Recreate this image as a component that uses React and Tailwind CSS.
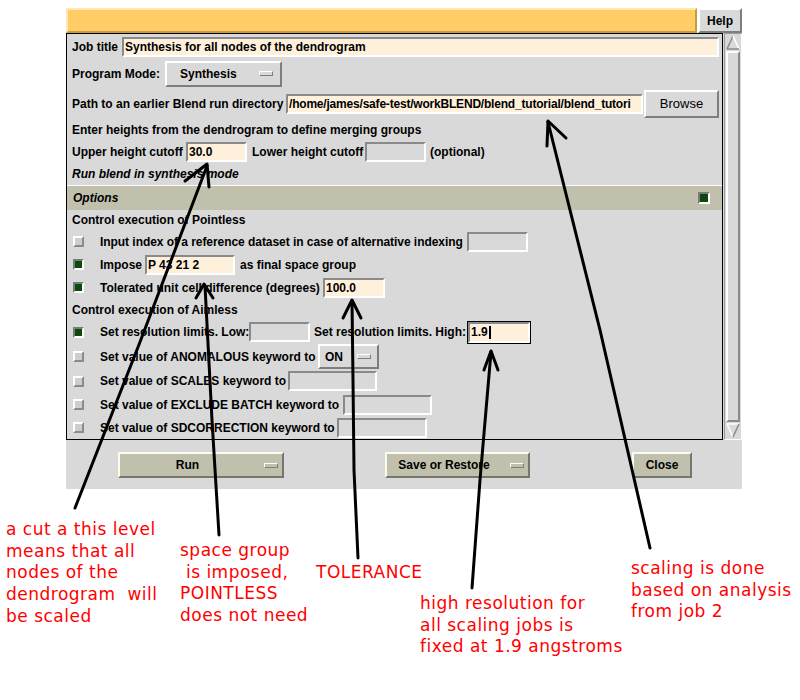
import React from 'react';

const raised = 'border-2 border-t-white border-l-white border-b-[#7e7e7e] border-r-[#7e7e7e]';
const sunken = 'border-2 border-t-[#8a8a8a] border-l-[#8a8a8a] border-b-white border-r-white';

const Field = ({ w, value, filled, tight }) => (
  <div
    className={`${w} h-[20px] ${sunken} ${filled ? 'bg-[#fff0dc]' : 'bg-[#d9d9d9]'} ${tight ? 'tracking-[-0.2px]' : ''} flex items-center pl-[1px] font-bold text-[12px] whitespace-nowrap overflow-hidden shrink-0`}
  >
    {value}
  </div>
);

const Check = ({ on }) =>
  on ? (
    <div className="w-[11px] h-[11px] shrink-0 border-2 border-t-[#7a7a7a] border-l-[#7a7a7a] border-b-white border-r-white bg-[#0a4a0a]" />
  ) : (
    <div className="w-[11px] h-[11px] shrink-0 border-2 border-t-white border-l-white border-b-[#8a8a8a] border-r-[#8a8a8a] bg-[#cdcdcd]" />
  );

const Indicator = ({ olive }) => (
  <div
    className={`w-[14px] h-[5px] shrink-0 border border-t-white border-l-white border-b-[#7e7e7e] border-r-[#7e7e7e] ${olive ? 'bg-[#c1c0ad]' : 'bg-[#d9d9d9]'}`}
  />
);

const CheckRow = ({ h, on, label, lw, children }) => (
  <div className={`${h} flex items-center pl-[6px]`}>
    <Check on={on} />
    <span className={`ml-[16px] ${lw} whitespace-nowrap shrink-0`}>{label}</span>
    {children}
  </div>
);

const OliveButton = ({ w, label, menu }) => (
  <div className={`${w} h-[26px] bg-[#c1c0ad] border-2 border-t-[#fbfbee] border-l-[#fbfbee] border-b-[#76766a] border-r-[#76766a] flex items-center font-bold text-[12px]`}>
    <span className={`flex-1 text-center ${menu ? 'pr-[9px]' : ''}`}>{label}</span>
    {menu && <div className="mr-[4px]"><Indicator olive /></div>}
  </div>
);

const notes = [
  { cls: 'left-[6px] top-[519px]', lines: ['a cut a this level', 'means that all', 'nodes of the', 'dendrogram  will', 'be scaled'] },
  { cls: 'left-[180px] top-[540px]', lines: ['space group', ' is imposed,', 'POINTLESS', 'does not need'] },
  { cls: 'left-[316px] top-[562px]', lines: ['TOLERANCE'] },
  { cls: 'left-[420px] top-[593px]', lines: ['high resolution for', 'all scaling jobs is', 'fixed at 1.9 angstroms'] },
  { cls: 'left-[631px] top-[558px]', lines: ['scaling is done', 'based on analysis', 'from job 2'] },
];

export default function App() {
  return (
    <div className="relative w-[800px] h-[700px] bg-white overflow-hidden font-['Liberation_Sans',Arial,sans-serif] text-black">
      <div className="ml-[66px] pt-[8px] w-[676px]">
        {/* title strip */}
        <div className="flex h-[25px] gap-[1px]">
          <div className="w-[631px] bg-[#ffcc66] border-2 border-t-[#ffe8b4] border-l-[#ffe8b4] border-b-[#c99a44] border-r-[#c99a44]" />
          <div className={`w-[44px] bg-[#d9d9d9] ${raised} flex items-center justify-center font-bold text-[12px]`}>Help</div>
        </div>

        <div className="bg-[#d9d9d9] text-[12px] font-bold">
          <div className="flex">
            <div className="w-[657px] border border-black">
              <div className="h-[25px] flex items-center pl-[5px]">
                <span className="w-[50px] shrink-0">Job title</span>
                <div className="flex-1 mr-[3px]">
                  <Field w="w-full" filled value="Synthesis for all nodes of the dendrogram" />
                </div>
              </div>

              <div className="h-[29px] flex items-center pl-[5px]">
                <span className="w-[93px] shrink-0">Program Mode:</span>
                <div className={`w-[117px] h-[26px] ${raised} flex items-center`}>
                  <span className="ml-[13px] w-[79px]">Synthesis</span>
                  <Indicator />
                </div>
              </div>

              <div className="h-[31px] flex items-center pl-[5px]">
                <span className="w-[214px] shrink-0 whitespace-nowrap">Path to an earlier Blend run directory</span>
                <Field w="w-[357px]" filled tight value="/home/james/safe-test/workBLEND/blend_tutorial/blend_tutori" />
                <div className={`ml-[1px] w-[75px] h-[28px] ${raised} flex items-center justify-center font-normal text-[13px]`}>Browse</div>
              </div>

              <div className="h-[22px] flex items-center pl-[5px] whitespace-nowrap">
                Enter heights from the dendrogram to define merging groups
              </div>

              <div className="h-[22px] flex items-center pl-[5px]">
                <span className="w-[114px] shrink-0 whitespace-nowrap">Upper height cutoff</span>
                <Field w="w-[61px]" filled value="30.0" />
                <span className="ml-[5px] w-[113px] shrink-0 whitespace-nowrap">Lower height cutoff</span>
                <Field w="w-[61px]" />
                <span className="ml-[4px]">(optional)</span>
              </div>

              <div className="h-[22px] flex items-center pl-[5px] italic">Run blend in synthesis mode</div>

              <div className="h-[1px] bg-white" />

              <div className="h-[24px] flex items-center justify-between pl-[6px] pr-[12px] bg-[#c1c0ad] italic">
                <span>Options</span>
                <div className="w-[12px] h-[12px] border-2 border-t-[#7a7a7a] border-l-[#7a7a7a] border-b-white border-r-white bg-[#0a4a0a]" />
              </div>

              <div className="h-[20px] flex items-center pl-[5px]">Control execution of Pointless</div>

              <CheckRow h="h-[23px]" label="Input index of a reference dataset in case of alternative indexing" lw="w-[367px] tracking-[-0.05px]">
                <Field w="w-[61px]" />
              </CheckRow>
              <CheckRow h="h-[23px]" on label="Impose" lw="w-[45px]">
                <Field w="w-[90px]" filled value="P 43 21 2" />
                <span className="ml-[5px]">as final space group</span>
              </CheckRow>
              <CheckRow h="h-[23px]" on label="Tolerated unit cell difference (degrees)" lw="w-[223px]">
                <Field w="w-[62px]" filled value="100.0" />
              </CheckRow>

              <div className="h-[21px] flex items-center pl-[5px]">Control execution of Aimless</div>

              <CheckRow h="h-[24px]" on label="Set resolution limits. Low:" lw="w-[149px]">
                <Field w="w-[61px]" />
                <span className="ml-[4px] w-[153px] shrink-0 whitespace-nowrap">Set resolution limits. High:</span>
                <div className="w-[64px] h-[23px] border border-black">
                  <div className={`h-full ${sunken} bg-[#fff0dc] flex items-center pl-[1px]`}>
                    1.9<span className="ml-[1px] w-[2px] h-[13px] bg-black" />
                  </div>
                </div>
              </CheckRow>
              <CheckRow h="h-[25px]" label="Set value of ANOMALOUS keyword to" lw="w-[218px]">
                <div className={`w-[61px] h-[25px] ${raised} flex items-center`}>
                  <span className="ml-[5px] w-[32px]">ON</span>
                  <Indicator />
                </div>
              </CheckRow>
              <CheckRow h="h-[24px]" label="Set value of SCALES keyword to" lw="w-[188px]">
                <Field w="w-[89px]" />
              </CheckRow>
              <CheckRow h="h-[23px]" label="Set value of EXCLUDE BATCH keyword to" lw="w-[243px]">
                <Field w="w-[89px]" />
              </CheckRow>
              <CheckRow h="h-[23px]" label="Set value of SDCORRECTION keyword to" lw="w-[237px]">
                <Field w="w-[90px]" />
              </CheckRow>
            </div>

            {/* scrollbar */}
            <div className="ml-[1px] w-[18px] bg-[#d9d9d9] border border-t-[#9a9a9a] border-l-[#9a9a9a] border-b-white border-r-white flex flex-col items-center">
              <svg width="14" height="15" className="mt-[1px] shrink-0">
                <polygon points="7,1 1,14 13,14" fill="#d9d9d9" />
                <line x1="7" y1="1" x2="1" y2="14" stroke="#8a8a8a" strokeWidth="1.5" />
                <line x1="7" y1="1" x2="13" y2="14" stroke="#ffffff" strokeWidth="1.5" />
                <line x1="1" y1="14" x2="13" y2="14" stroke="#8a8a8a" strokeWidth="1.5" />
              </svg>
              <div className="flex-1 w-[14px] my-[1px] border-2 border-t-white border-l-white border-b-[#8a8a8a] border-r-[#8a8a8a]" />
              <svg width="14" height="15" className="mb-[1px] shrink-0">
                <polygon points="1,1 13,1 7,14" fill="#d9d9d9" />
                <line x1="1" y1="1" x2="13" y2="1" stroke="#ffffff" strokeWidth="1.5" />
                <line x1="1" y1="1" x2="7" y2="14" stroke="#ffffff" strokeWidth="1.5" />
                <line x1="13" y1="1" x2="7" y2="14" stroke="#8a8a8a" strokeWidth="1.5" />
              </svg>
            </div>
          </div>

          {/* bottom buttons */}
          <div className="h-[49px] pt-[12px] flex items-start">
            <div className="ml-[52px]"><OliveButton w="w-[166px]" label="Run" menu /></div>
            <div className="ml-[101px]"><OliveButton w="w-[145px]" label="Save or Restore" menu /></div>
            <div className="ml-[102px]"><OliveButton w="w-[60px]" label="Close" /></div>
          </div>
        </div>
      </div>

      {/* hand-drawn annotation arrows */}
      <svg className="absolute left-0 top-0 pointer-events-none" width="800" height="700">
        <g fill="none" stroke="#000" strokeWidth="3" strokeLinecap="round" strokeLinejoin="round">
          <path d="M75,508 L140,342 L207,166" />
          <path d="M185,181 L207,164 L209,187" />
          <path d="M219,535 L212,420 L205,286" />
          <path d="M196,298 L204,284 L213,298" />
          <path d="M358,558 L354,470 L353,380 L352,301" />
          <path d="M343,318 L352,300 L361,318" />
          <path d="M472,588 L480,480 L491,352" />
          <path d="M484,370 L491,351 L498,370" />
          <path d="M650,548 L600,330 L548,122" />
          <path d="M547,146 L548,121 L566,138" />
        </g>
      </svg>

      {notes.map((n, i) => (
        <div
          key={i}
          className={`absolute ${n.cls} text-[17px] leading-[21.7px] tracking-[0.5px] text-[#ff0000] font-['DejaVu_Sans',sans-serif] whitespace-pre`}
        >
          {n.lines.map((l, j) => (
            <div key={j}>{l}</div>
          ))}
        </div>
      ))}
    </div>
  );
}
